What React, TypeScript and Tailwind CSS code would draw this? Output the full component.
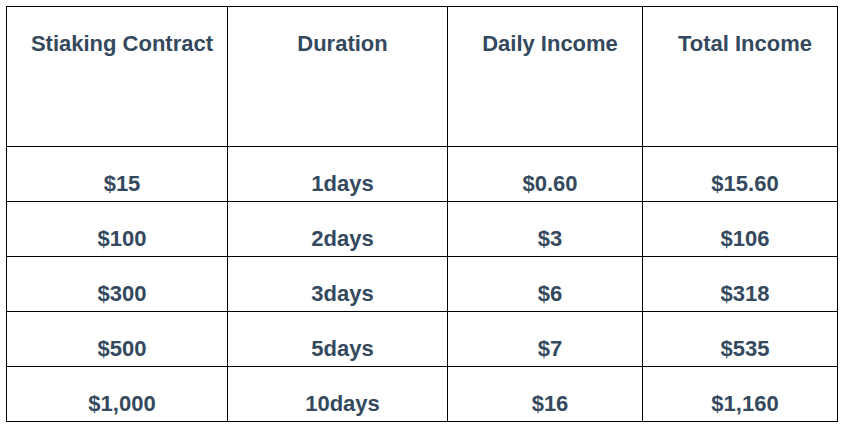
import React from "react";

const rows = [
  ["$15", "1days", "$0.60", "$15.60"],
  ["$100", "2days", "$3", "$106"],
  ["$300", "3days", "$6", "$318"],
  ["$500", "5days", "$7", "$535"],
  ["$1,000", "10days", "$16", "$1,160"],
];

const headers = ["Stiaking Contract", "Duration", "Daily Income", "Total Income"];

const App = () => {
  return (
    <div className="bg-white w-[845px] h-[430px] overflow-hidden pt-[6px] pl-[6px] font-['Liberation_Sans',Arial,sans-serif]">
      <table className="table-fixed border-collapse w-[831px] text-[#34495e] text-[22px] leading-[24px] font-bold">
        <colgroup>
          <col className="w-[221px]" />
          <col className="w-[220px]" />
          <col className="w-[195px]" />
          <col className="w-[195px]" />
        </colgroup>
        <thead>
          <tr className="h-[140px]">
            {headers.map((h) => (
              <th
                key={h}
                className="border border-black align-top text-center pt-[25px] pl-[10px] font-bold"
              >
                {h}
              </th>
            ))}
          </tr>
        </thead>
        <tbody>
          {rows.map((r, i) => (
            <tr key={i} className="h-[55px]">
              {r.map((c, j) => (
                <td
                  key={j}
                  className="border border-black align-top text-center pt-[25px] pl-[10px]"
                >
                  {c}
                </td>
              ))}
            </tr>
          ))}
        </tbody>
      </table>
    </div>
  );
};

export default App;
